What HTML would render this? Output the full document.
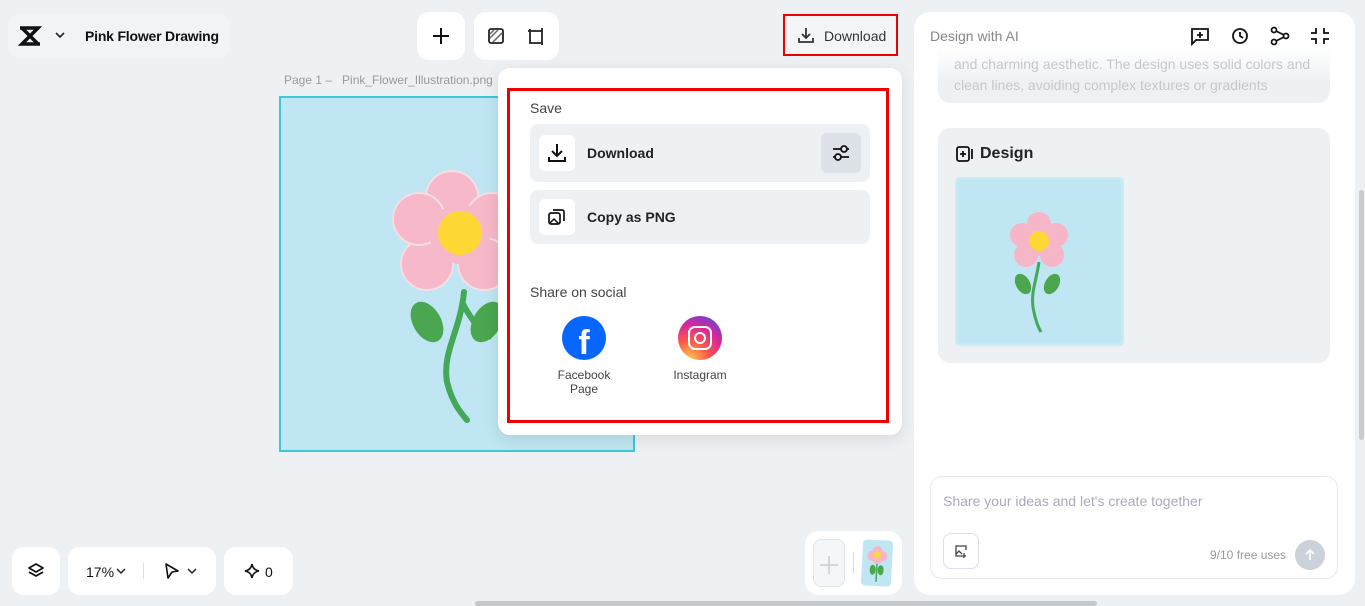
<!DOCTYPE html>
<html><head><meta charset="utf-8"><style>
*{box-sizing:border-box;margin:0;padding:0}
body{width:1365px;height:606px;overflow:hidden;background:#eef1f4;font-family:"Liberation Sans",sans-serif;position:relative;color:#111}
.a{position:absolute}
.w{background:#fff;border-radius:12px}
svg{display:block}
</style></head><body>
<div class="a" style="left:8px;top:14px;width:222px;height:44px;background:#f1f3f5;border-radius:12px"></div>
<svg class="a" style="left:18px;top:26px" width="24" height="20" viewBox="0 0 24 20"><path d="M2 2h18l-16 16h18M4 2l16 16" stroke="#111" stroke-width="3.5" fill="none"/></svg>
<svg class="a" style="left:54px;top:31px" width="12" height="8"><path d="M2 2l4 4 4-4" stroke="#222" stroke-width="1.6" fill="none"/></svg>
<div class="a" style="left:85px;top:28px;font-size:14px;font-weight:bold;letter-spacing:-0.2px">Pink Flower Drawing</div>

<div class="a w" style="left:417px;top:12px;width:48px;height:48px"></div>
<svg class="a" style="left:431px;top:26px" width="20" height="20"><path d="M10 2v16M2 10h16" stroke="#111" stroke-width="2"/></svg>
<div class="a w" style="left:474px;top:12px;width:85px;height:48px"></div>
<svg class="a" style="left:487px;top:27px" width="18" height="18"><rect x="2" y="2" width="14" height="14" rx="2" stroke="#222" stroke-width="1.8" fill="none"/><path d="M3 11l8-8M6 15l9-9M3 7l4-4" stroke="#666" stroke-width="1.5"/></svg>
<svg class="a" style="left:526px;top:26px" width="20" height="20"><path d="M4 3v14h12M2 5h14v14M16 2v4" stroke="#222" stroke-width="1.8" fill="none"/></svg>

<div class="a" style="left:783px;top:14px;width:115px;height:42px;border:2px solid #e00;background:#f4f5f7"></div>
<svg class="a" style="left:797px;top:26px" width="18" height="18"><path d="M9 2v10M5 8l4 4 4-4M2 12v4h14v-4" stroke="#333" stroke-width="1.8" fill="none"/></svg>
<div class="a" style="left:824px;top:28px;font-size:14px;color:#333">Download</div>

<div class="a" style="left:284px;top:73px;font-size:12px;color:#999">Page 1 –&nbsp;&nbsp; Pink_Flower_Illustration.png</div>
<div class="a" style="left:279px;top:96px;width:356px;height:356px;border:2px solid #3cc8d8;background:#bfe6f2;overflow:hidden">
<svg width="356" height="356" viewBox="279 96 356 356">
<path d="M462 290 C 458 330,440 350,445 380 C 450 400,458 410,465 418" stroke="#43a857" stroke-width="6" fill="none" stroke-linecap="round"/>
<path d="M460 300 C 470 320,480 330,490 335" stroke="#43a857" stroke-width="6" fill="none"/>
<ellipse cx="425" cy="320" rx="14" ry="22" transform="rotate(-30 425 320)" fill="#4aa64f"/>
<ellipse cx="485" cy="320" rx="14" ry="22" transform="rotate(30 485 320)" fill="#4aa64f"/>
<g fill="#f7b8c9" stroke="#f3dfe6" stroke-width="2">
<circle cx="450" cy="195" r="26"/><circle cx="490" cy="217" r="26"/><circle cx="482" cy="262" r="26"/><circle cx="425" cy="262" r="26"/><circle cx="417" cy="217" r="26"/><circle cx="458" cy="232" r="30" stroke="none"/>
</g>
<circle cx="458" cy="231" r="22" fill="#fdd834"/>
</svg></div>

<div class="a w" style="left:498px;top:68px;width:404px;height:367px;box-shadow:0 4px 16px rgba(0,0,0,.1)"></div>
<div class="a" style="left:507px;top:88px;width:382px;height:335px;border:3px solid #e00"></div>
<div class="a" style="left:530px;top:100px;font-size:14px;color:#444">Save</div>
<div class="a" style="left:530px;top:124px;width:340px;height:58px;background:#eef1f4;border-radius:8px"></div>
<div class="a" style="left:539px;top:135px;width:36px;height:36px;background:#fff;border-radius:6px"></div>
<svg class="a" style="left:547px;top:143px" width="20" height="20"><path d="M10 1v12M5 8l5 5 5-5M2 14v4h16v-4" stroke="#111" stroke-width="2" fill="none"/></svg>
<div class="a" style="left:587px;top:145px;font-size:14px;font-weight:bold;color:#222">Download</div>
<div class="a" style="left:821px;top:133px;width:40px;height:40px;background:#dde2e8;border-radius:6px"></div>
<svg class="a" style="left:831px;top:143px" width="20" height="20"><path d="M2 6h16M2 14h16" stroke="#111" stroke-width="1.8"/><circle cx="13" cy="6" r="3" fill="#dde2e8" stroke="#111" stroke-width="1.8"/><circle cx="7" cy="14" r="3" fill="#dde2e8" stroke="#111" stroke-width="1.8"/></svg>
<div class="a" style="left:530px;top:190px;width:340px;height:54px;background:#eef1f4;border-radius:8px"></div>
<div class="a" style="left:539px;top:199px;width:36px;height:36px;background:#fff;border-radius:6px"></div>
<svg class="a" style="left:547px;top:207px" width="20" height="20"><rect x="2" y="6" width="11" height="11" rx="2" stroke="#111" stroke-width="1.7" fill="none"/><path d="M6 3h9a2 2 0 0 1 2 2v9" stroke="#111" stroke-width="1.7" fill="none"/><path d="M3 16l4-4 5 5" stroke="#111" stroke-width="1.5" fill="none"/></svg>
<div class="a" style="left:587px;top:209px;font-size:14px;font-weight:bold;color:#222">Copy as PNG</div>
<div class="a" style="left:530px;top:284px;font-size:14px;color:#444">Share on social</div>
<div class="a" style="left:562px;top:316px;width:44px;height:44px;border-radius:50%;background:#0866ff"></div>
<div class="a" style="left:572px;top:321px;width:24px;height:39px;color:#fff;font-weight:bold;font-size:34px;text-align:center;line-height:44px">f</div>
<div class="a" style="left:678px;top:316px;width:44px;height:44px;border-radius:50%;background:radial-gradient(circle at 25% 100%,#fdcb52 0,#fd5949 35%,#d6249f 65%,#285aeb 100%)"></div>
<div class="a" style="left:688px;top:326px;width:24px;height:24px;border:2.5px solid #fff;border-radius:7px"></div>
<div class="a" style="left:694px;top:332px;width:12px;height:12px;border:2.5px solid #fff;border-radius:50%"></div>
<div class="a" style="left:540px;top:368px;width:88px;text-align:center;font-size:12px;color:#444;line-height:14px">Facebook<br>Page</div>
<div class="a" style="left:656px;top:368px;width:88px;text-align:center;font-size:12px;color:#444">Instagram</div>

<div class="a w" style="left:914px;top:12px;width:441px;height:583px;border-radius:16px"></div>
<div class="a" style="left:930px;top:28px;font-size:14px;color:#888">Design with AI</div>
<svg class="a" style="left:1190px;top:26px" width="140" height="20"><g stroke="#111" stroke-width="1.8" fill="none"><path d="M2 3h16v11H6l-4 4z"/><path d="M10 6v6M7 9h6"/><circle cx="50" cy="10" r="7"/><path d="M50 6v4l3 2"/><circle cx="84" cy="4" r="2.5"/><circle cx="84" cy="16" r="2.5"/><circle cx="96" cy="10" r="2.5"/><path d="M86 5l8 4M86 15l8-4"/><path d="M126 2v5h-5M134 2v5h5M126 18v-5h-5M134 18v-5h5"/></g></svg>
<div class="a" style="left:938px;top:48px;width:392px;height:55px;background:linear-gradient(#fff,#eef1f4 60%);border-radius:0 0 12px 12px;overflow:hidden;font-size:14px;color:#c4c7cc;padding:6px 16px;line-height:21px">and charming aesthetic. The design uses solid colors and clean lines, avoiding complex textures or gradients</div>
<div class="a" style="left:938px;top:128px;width:392px;height:235px;background:#eef1f4;border-radius:12px"></div>
<svg class="a" style="left:955px;top:145px" width="20" height="18"><rect x="2" y="2" width="12" height="14" rx="2" stroke="#111" stroke-width="1.8" fill="none"/><path d="M8 6v6M5 9h6M17 4v10" stroke="#111" stroke-width="1.8"/></svg>
<div class="a" style="left:980px;top:145px;font-size:16px;font-weight:bold;color:#222">Design</div>
<div class="a" style="left:955px;top:177px;width:169px;height:169px;background:#bfe6f2;border-radius:4px;overflow:hidden;box-shadow:inset 0 0 4px #e4f4fa">
<svg width="169" height="169" viewBox="0 0 169 169"><path d="M84 85c-3 20-8 30-6 45 2 12 5 20 8 25" stroke="#43a857" stroke-width="3" fill="none"/><ellipse cx="68" cy="107" rx="7" ry="11" transform="rotate(-30 68 107)" fill="#4aa64f"/><ellipse cx="97" cy="107" rx="7" ry="11" transform="rotate(30 97 107)" fill="#4aa64f"/><g fill="#f7b6c8"><circle cx="84" cy="47" r="12"/><circle cx="101" cy="58" r="12"/><circle cx="97" cy="78" r="12"/><circle cx="71" cy="78" r="12"/><circle cx="67" cy="58" r="12"/><circle cx="84" cy="65" r="14"/></g><circle cx="84" cy="64" r="10" fill="#fdd834"/></svg></div>

<div class="a w" style="left:930px;top:476px;width:408px;height:103px;border:1px solid #e6e9ee"></div>
<div class="a" style="left:943px;top:493px;font-size:14px;color:#aab">Share your ideas and let's create together</div>
<div class="a" style="left:943px;top:533px;width:36px;height:36px;border:1px solid #dde;border-radius:8px"></div>
<svg class="a" style="left:954px;top:544px" width="14" height="14"><path d="M12 6V2H2v10h6M2 10l3-3 3 3M10 9v5M8 12h4" stroke="#444" stroke-width="1.3" fill="none"/></svg>
<div class="a" style="left:1210px;top:548px;font-size:12px;color:#999">9/10 free uses</div>
<div class="a" style="left:1295px;top:540px;width:30px;height:30px;border-radius:50%;background:#ccd2da"></div>
<svg class="a" style="left:1303px;top:548px" width="14" height="14"><path d="M7 12V2M3 6l4-4 4 4" stroke="#fff" stroke-width="1.6" fill="none"/></svg>
<div class="a" style="left:1359px;top:190px;width:5px;height:250px;background:#c9ccd0;border-radius:3px"></div>

<div class="a w" style="left:805px;top:531px;width:97px;height:64px;border-radius:14px"></div>
<div class="a" style="left:813px;top:539px;width:32px;height:48px;border:1px solid #e1e4e8;border-radius:8px;background:#f4f6f8"></div>
<svg class="a" style="left:819px;top:555px" width="20" height="20"><path d="M10 1v18M1 10h18" stroke="#ccc" stroke-width="1.5"/></svg>
<div class="a" style="left:853px;top:552px;width:1px;height:22px;background:#ddd"></div>
<div class="a" style="left:862px;top:540px;width:30px;height:46px;border-radius:4px;background:#bfe6f2;transform:rotate(3deg)">
<svg width="30" height="46"><path d="M15 20v22" stroke="#43a857" stroke-width="1.5"/><ellipse cx="11" cy="30" rx="3" ry="5" fill="#4aa64f"/><ellipse cx="19" cy="30" rx="3" ry="5" fill="#4aa64f"/><g fill="#f7b6c8"><circle cx="15" cy="11" r="5"/><circle cx="20" cy="16" r="5"/><circle cx="10" cy="16" r="5"/><circle cx="15" cy="19" r="5"/></g><circle cx="15" cy="15" r="3.5" fill="#fdd834"/></svg></div>

<div class="a w" style="left:12px;top:547px;width:48px;height:48px"></div>
<svg class="a" style="left:27px;top:562px" width="18" height="18"><path d="M9 2l7 4-7 4-7-4zM2 10l7 4 7-4" stroke="#111" stroke-width="1.7" fill="none" stroke-linejoin="round"/></svg>
<div class="a w" style="left:68px;top:547px;width:148px;height:48px"></div>
<div class="a" style="left:86px;top:564px;font-size:14px">17%</div>
<svg class="a" style="left:116px;top:567px" width="10" height="8"><path d="M1 2l4 4 4-4" stroke="#222" stroke-width="1.5" fill="none"/></svg>
<div class="a" style="left:143px;top:563px;width:1px;height:16px;background:#ddd"></div>
<svg class="a" style="left:164px;top:562px" width="16" height="18"><path d="M2 2l12 7-6 1-4 6z" stroke="#111" stroke-width="1.6" fill="none" stroke-linejoin="round"/></svg>
<svg class="a" style="left:187px;top:567px" width="10" height="8"><path d="M1 2l4 4 4-4" stroke="#222" stroke-width="1.5" fill="none"/></svg>
<div class="a w" style="left:224px;top:547px;width:69px;height:48px"></div>
<svg class="a" style="left:244px;top:563px" width="16" height="16"><path d="M8 1q1 6 7 7q-6 1-7 7q-1-6-7-7q6-1 7-7z" stroke="#111" stroke-width="1.6" fill="none"/></svg>
<div class="a" style="left:265px;top:564px;font-size:14px">0</div>

<div class="a" style="left:475px;top:601px;width:622px;height:5px;background:#c4c7cb;border-radius:3px"></div>
</body></html>
